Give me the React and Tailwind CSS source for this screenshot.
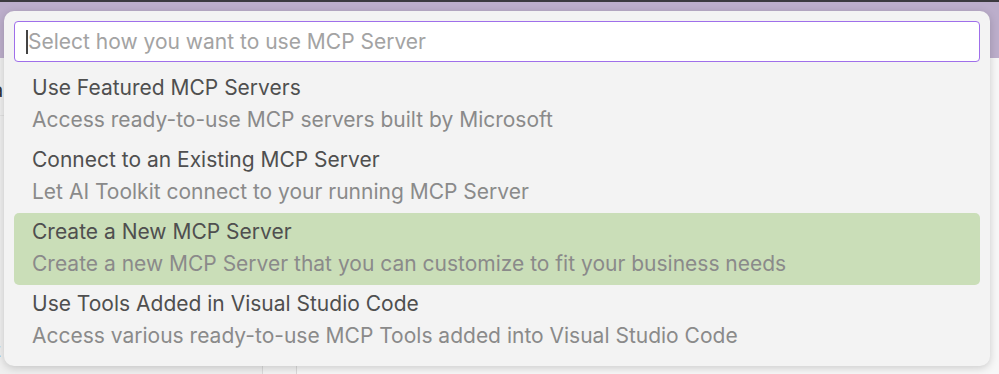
const OPTIONS = [
  { title: 'Use Featured MCP Servers', desc: 'Access ready-to-use MCP servers built by Microsoft' },
  { title: 'Connect to an Existing MCP Server', desc: 'Let AI Toolkit connect to your running MCP Server' },
  { title: 'Create a New MCP Server', desc: 'Create a new MCP Server that you can customize to fit your business needs', active: true },
  { title: 'Use Tools Added in Visual Studio Code', desc: 'Access various ready-to-use MCP Tools added into Visual Studio Code' },
]

export default function App() {
  return (
    <div className="relative w-[999px] h-[374px] overflow-hidden bg-[#ececec] font-['Inter','Liberation_Sans',sans-serif]">
      {/* page behind the quick pick */}
      <div className="h-[2px] bg-[#3b3a3f]" />
      <div className="h-[56px] bg-[#bcaecb]" />
      <div className="flex h-[316px]">
        <div className="w-[263px] bg-[#efefef] border-r border-[#dadada] flex flex-col text-[20px] text-[#333]">
          <div className="h-[58px] border-b border-[#e2e2e2]" />
          <div className="flex-1" />
          <div className="-ml-[6px] pb-[12px] leading-[24px]">t</div>
        </div>
        <div className="w-[34px] bg-[#f3f3f3] border-r border-[#dadada]" />
        <div className="flex-1 bg-[#f7f7f7]" />
      </div>
      <div className="absolute left-0 top-[78px] -ml-[8px] text-[20px] leading-[24px] text-[#333]">a</div>

      {/* quick pick */}
      <div className="absolute left-[4px] top-[11px] w-[986px] h-[355px] rounded-[10px] bg-[#f3f3f3] shadow-[0_2px_8px_rgba(0,0,0,0.18)] px-[10px] pt-[10px] flex flex-col">
        <div className="h-[41px] rounded-[4px] border-[1.5px] border-[#9f6fea] bg-white flex items-center pl-[11px]">
          <span className="w-[1.5px] h-[24px] bg-[#444]" />
          <span className="text-[21px] text-[#a3a3a3] ml-[0.5px]">Select how you want to use MCP Server</span>
        </div>
        <div className="mt-[7px] flex flex-col">
          {OPTIONS.map(o => (
            <div
              key={o.title}
              className={`h-[72px] rounded-[5px] pl-[18px] pt-[3px] ${o.active ? 'bg-[#cadeb8]' : ''}`}
            >
              <div className="text-[21px] leading-[32px] text-[#4f4f4f]">{o.title}</div>
              <div className="text-[21px] leading-[32px] text-[#8a8a8a]">{o.desc}</div>
            </div>
          ))}
        </div>
      </div>
    </div>
  )
}
